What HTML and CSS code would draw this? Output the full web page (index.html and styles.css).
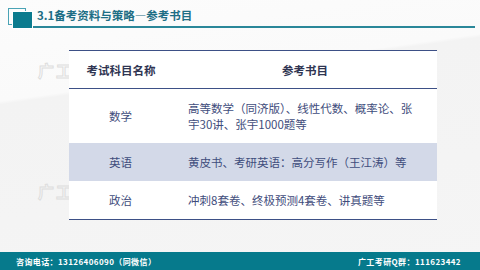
FILE: index.html
```html
<!DOCTYPE html>
<html lang="zh-CN">
<head>
  <meta charset="UTF-8">
  <meta name="viewport" content="width=device-width, initial-scale=1.0">
  <title>3.1备考资料与策略—参考书目</title>
  <link rel="stylesheet" href="styles.css">
</head>
<body>
  <!-- Title Bar -->
  <header class="topbar">
    <svg class="logo" width="26" height="22" viewBox="0 0 26 22">
      <rect x="1.5" y="1.5" width="17" height="16" fill="none" stroke="#4aa3b5" stroke-width="1"/>
      <rect x="5.5" y="4.5" width="20" height="17" fill="#0b7b8e" stroke="#ffffff" stroke-width="1"/>
    </svg>
    <h1 class="title">3.1备考资料与策略—参考书目</h1>
  </header>

  <!-- Book Table -->
  <main class="content">
    <span class="mark mark-top">广工</span>
    <span class="mark mark-bottom">广工</span>
    <table class="books">
      <thead>
        <tr>
          <th class="col-subject">考试科目名称</th>
          <th class="col-books">参考书目</th>
        </tr>
      </thead>
      <tbody>
        <tr>
          <td class="col-subject">数学</td>
          <td class="col-books">高等数学（同济版）、线性代数、概率论、张宇30讲、张宇1000题等</td>
        </tr>
        <tr class="shaded">
          <td class="col-subject">英语</td>
          <td class="col-books">黄皮书、考研英语：高分写作（王江涛）等</td>
        </tr>
        <tr>
          <td class="col-subject">政治</td>
          <td class="col-books">冲刺8套卷、终极预测4套卷、讲真题等</td>
        </tr>
      </tbody>
    </table>
  </main>

  <!-- Footer -->
  <footer class="footer">
    <p>咨询电话：13126406090（同微信）</p>
    <p>广工考研Q群：111623442</p>
  </footer>
</body>
</html>
```

FILE: styles.css
```css
/* Global Styles */
* {
  margin: 0;
  padding: 0;
  box-sizing: border-box;
}

body {
  width: 480px;
  height: 270px;
  overflow: hidden;
  display: flex;
  flex-direction: column;
  font-family: "Noto Sans CJK SC", "Noto Sans", sans-serif;
  background: linear-gradient(172deg, #fcfcfc 0%, #fafafa 30%, #f3f3f3 31%, #f5f5f5 100%);
}

/* Title Bar */
.topbar {
  display: flex;
  align-items: flex-end;
  padding: 7px 5px 0 7px;
}

.logo {
  display: block;
  flex-shrink: 0;
  margin-bottom: -1px;
}

.title {
  flex: 1;
  font-size: 11.5px;
  font-weight: 700;
  line-height: 15px;
  color: #1d6e85;
  padding: 0 0 3px 4px;
  border-bottom: 2px solid #2a8799;
}

/* Table */
.content {
  flex: 1;
  position: relative;
  padding: 22px 0 0 69px;
}

.mark {
  position: absolute;
  left: 38px;
  font-size: 16px;
  font-weight: 700;
  letter-spacing: 2px;
  color: transparent;
  -webkit-text-stroke: 1px #dedede;
}

.mark-top {
  top: 30px;
}

.mark-bottom {
  top: 151px;
}

.books {
  position: relative;
  width: 368px;
  border-collapse: collapse;
  background-color: #fff;
  font-size: 11.5px;
  line-height: 16px;
  color: #3f4d7c;
  border-top: 1.5px solid #3d5086;
  border-bottom: 1.5px solid #3d5086;
}

.books th {
  font-weight: 700;
  color: #2f3552;
  height: 38px;
  text-align: center;
  border-bottom: 1px solid #3d5086;
}

.books td {
  padding: 11px 16px 11px 15px;
  vertical-align: middle;
}

.books .col-subject {
  width: 104px;
  text-align: center;
}

.books td.col-books {
  text-align: left;
}

.books tr.shaded td {
  background-color: #d3d9e8;
}

/* Footer */
.footer {
  height: 18px;
  display: flex;
  justify-content: space-between;
  align-items: center;
  padding: 0 19px 0 16px;
  background-color: #067a8c;
  color: #fff;
  font-size: 8px;
  font-weight: 700;
  letter-spacing: 0.4px;
}
```
